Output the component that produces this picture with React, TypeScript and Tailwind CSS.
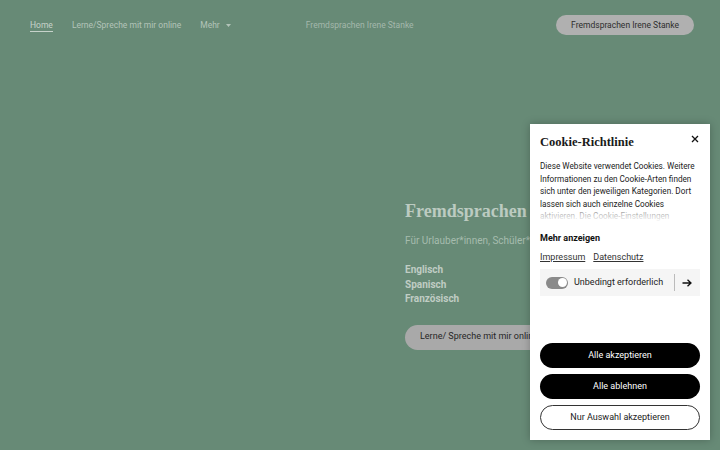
import React from "react";

export default function App() {
  const sans = { fontFamily: "Roboto, 'Noto Sans', sans-serif" };
  const serif = { fontFamily: "'Liberation Serif', 'DejaVu Serif', serif" };
  return (
    <div className="relative w-[720px] h-[450px] overflow-hidden bg-[#678a76]" style={sans}>
      {/* Nav */}
      <header className="flex items-center h-[48px] pt-[2px] pl-[30px] pr-[26px]">
        <nav className="flex items-center gap-[19px] text-[8.5px] text-[#b3c4b9]">
          <span className="relative text-[#c6d2ca]">
            Home
            <span className="absolute left-0 right-0 top-[12px] h-[1px] bg-[#c6d2ca]" />
          </span>
          <span>Lerne/Spreche mit mir online</span>
          <span className="flex items-center gap-[6px]">
            Mehr
            <svg width="5" height="3" viewBox="0 0 5 3"><path d="M0 0 L5 0 L2.5 3Z" fill="#b3c4b9" /></svg>
          </span>
        </nav>
        <div className="ml-[75px] text-[8.5px] text-[#a4b8ac]">Fremdsprachen Irene Stanke</div>
        <div className="ml-auto h-[20px] px-[15px] rounded-full bg-[#b0b0b0] text-[#2e2e2e] text-[8.5px] flex items-center">
          Fremdsprachen Irene Stanke
        </div>
      </header>

      {/* Hero */}
      <main className="pl-[405px] pt-[152px]">
        <h1 className="text-[18px] font-bold text-[#bccbc1] leading-[22px] whitespace-nowrap" style={serif}>
          Fremdsprachen Irene Stanke
        </h1>
        <p className="mt-[11px] text-[10px] text-[#a6bcae] whitespace-nowrap">Für Urlauber*innen, Schüler*innen und Berufstätige</p>
        <div className="mt-[15px] text-[10px] font-bold text-[#c0cdc4] leading-[14.5px]">
          <div>Englisch</div>
          <div>Spanisch</div>
          <div>Französisch</div>
        </div>
        <div className="mt-[18px] inline-flex items-center h-[25px] px-[15px] rounded-full bg-[#a9a9a9] text-[9px] text-[#262626]">
          Lerne/ Spreche mit mir online
        </div>
      </main>

      {/* Cookie panel */}
      <div className="absolute left-[530px] top-[124px] w-[180px] h-[316px] bg-white shadow-[0_0_8px_rgba(0,0,0,0.25)] px-[10px] pt-[10px]">
        <div className="flex items-start justify-between">
          <div className="text-[12.5px] font-bold text-[#1a1a1a] leading-[16px]" style={serif}>Cookie-Richtlinie</div>
          <svg width="8" height="8" viewBox="0 0 8 8" className="mt-[1px] mr-[1px]"><path d="M1 1 L7 7 M7 1 L1 7" stroke="#111" strokeWidth="1.3" /></svg>
        </div>
        <div className="relative mt-[10px] h-[62px] overflow-hidden text-[8.2px] leading-[12.5px] text-[#222] whitespace-nowrap">
          <div>Diese Website verwendet Cookies. Weitere</div>
          <div>Informationen zu den Cookie-Arten finden</div>
          <div>sich unter den jeweiligen Kategorien. Dort</div>
          <div>lassen sich auch einzelne Cookies</div>
          <div>aktivieren. Die Cookie-Einstellungen</div>
          <div className="absolute left-0 right-0 bottom-0 h-[12px] bg-gradient-to-b from-white/50 to-white" />
        </div>
        <div className="mt-[10px] text-[9px] font-bold text-[#111]">Mehr anzeigen</div>
        <div className="mt-[5px] flex gap-[8px] text-[9px] text-[#333] underline">
          <span>Impressum</span>
          <span>Datenschutz</span>
        </div>
        <div className="mt-[5px] h-[27px] bg-[#f5f5f5] flex items-center pl-[6px] pr-[8px]">
          <div className="w-[22px] h-[12px] rounded-full bg-[#8a8a8a] flex items-center justify-end pr-[1.5px]">
            <div className="w-[9px] h-[9px] rounded-full bg-white" />
          </div>
          <span className="ml-[6px] text-[9px] text-[#222]">Unbedingt erforderlich</span>
          <div className="ml-auto w-[1px] h-[17px] bg-[#bbb]" />
          <svg width="10" height="8" viewBox="0 0 10 8" className="ml-[7px]"><path d="M0.5 4 H9 M5.5 0.7 L9 4 L5.5 7.3" stroke="#111" strokeWidth="1.3" fill="none" /></svg>
        </div>
        <div className="mt-[47px] flex flex-col gap-[6px]">
          <div className="h-[25px] rounded-full bg-black text-white text-[9px] flex items-center justify-center">Alle akzeptieren</div>
          <div className="h-[25px] rounded-full bg-black text-white text-[9px] flex items-center justify-center">Alle ablehnen</div>
          <div className="h-[25px] rounded-full border border-[#333] text-[#222] text-[9px] flex items-center justify-center">Nur Auswahl akzeptieren</div>
        </div>
      </div>
    </div>
  );
}
